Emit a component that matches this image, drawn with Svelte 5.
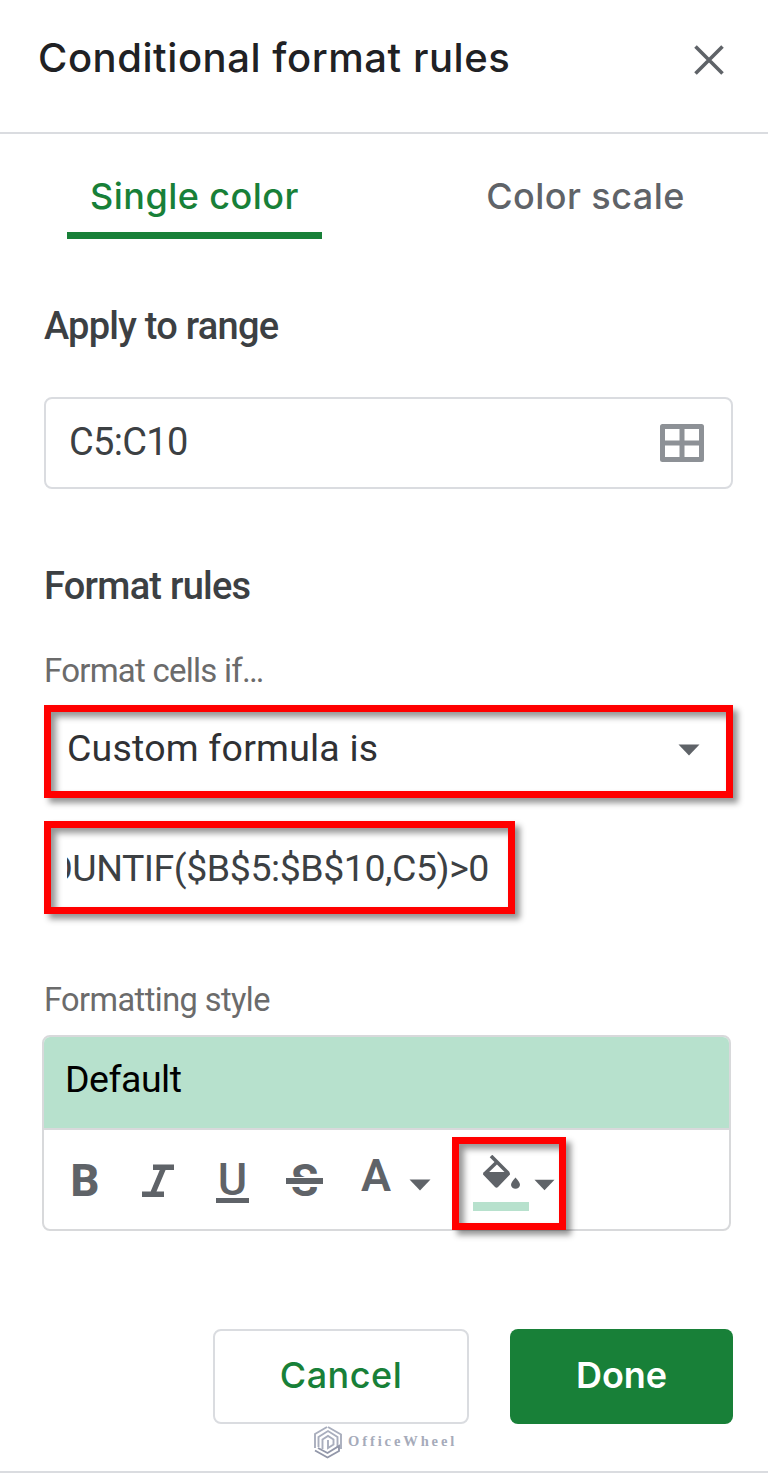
<script lang="ts">
  let tab = $state('single');
  let range = $state('C5:C10');
</script>

{#snippet caret()}
  <svg class="caret" viewBox="0 0 22 12" width="22" height="12" aria-hidden="true">
    <path d="M0.5 0.5h21L11 11.5z" fill="currentColor" />
  </svg>
{/snippet}

<div class="sidebar">
  <header>
    <h1>Conditional format rules</h1>
    <button class="close" aria-label="Close">
      <svg viewBox="0 0 30 30" width="30" height="30">
        <path d="M1.5 1.5l27 27M28.5 1.5l-27 27" fill="none" stroke="currentColor" stroke-width="3.6" />
      </svg>
    </button>
  </header>

  <nav>
    <button class="tab" class:active={tab === 'single'} onclick={() => (tab = 'single')}>Single color</button>
    <button class="tab" class:active={tab === 'scale'} onclick={() => (tab = 'scale')}>Color scale</button>
  </nav>

  <main>
    <h2>Apply to range</h2>
    <div class="range">
      <span>{range}</span>
      <svg viewBox="0 0 44 38" width="44" height="38" aria-hidden="true">
        <path d="M2.5 2.5h39v33h-39zM22 2v34M2 19h40" fill="none" stroke="#8d9196" stroke-width="5" stroke-linejoin="round" />
      </svg>
    </div>

    <h2 class="rules">Format rules</h2>
    <p class="label">Format cells if…</p>
    <div class="condition frame">
      <span>Custom formula is</span>
      {@render caret()}
    </div>
    <div class="formula frame">
      <div class="clip"><span>OUNTIF($B$5:$B$10,C5)&gt;0</span></div>
    </div>

    <p class="label style-label">Formatting style</p>
    <div class="style-box">
      <div class="preview">Default</div>
      <div class="toolbar">
        <button class="bold" aria-label="Bold">B</button>
        <button class="italic" aria-label="Italic">
          <svg viewBox="0 0 34 34" width="34" height="34">
            <path d="M12 3.2h21M1 30.3h22M22.5 4L11.5 30" fill="none" stroke="currentColor" stroke-width="5.4" />
          </svg>
        </button>
        <button class="underline" aria-label="Underline">U</button>
        <button class="strike" aria-label="Strikethrough">S</button>
        <button class="color" aria-label="Text color">A</button>
        <span class="color-caret">{@render caret()}</span>
        <div class="fill frame">
          <div class="bucket">
            <svg viewBox="0 0 40 36" width="40" height="36" aria-hidden="true">
              <path d="M10 1L27.500 18.500M16 7L3.500 19" fill="none" stroke="currentColor" stroke-width="3.600" />
              <path d="M3.500 17h24q2.500 1.500 1 3L17 32q-1.500 1.500-3 0L2.500 20q-1.500-1.500 1-3z" fill="currentColor" />
              <path d="M34.500 22.500q4.500 5 4.500 7.200a4.500 4 0 0 1-9 0q0-2.200 4.500-7.200z" fill="currentColor" />
            </svg>
            <i class="swatch"></i>
          </div>
          {@render caret()}
        </div>
      </div>
    </div>

    <div class="actions">
      <button class="cancel">Cancel</button>
      <button class="done">Done</button>
    </div>
  </main>

  <footer>
    <svg viewBox="0 0 30 34" width="30" height="34" aria-hidden="true">
      <g fill="none" stroke="#a9aebd" stroke-width="1.9">
        <path d="M2 23V9L14 2M15 2l13 7.500V24" />
        <path d="M5.500 22V12L15 6l9.500 6v10.500" />
        <path d="M9.500 24V14.500L15 11l5.500 3.500v5L15 23v-8" />
        <path d="M2 25.500L14.500 32.500 26 26v-5L14.500 28 5 23" stroke="#9297a9" />
      </g>
    </svg>
    <span>OfficeWheel</span>
  </footer>
</div>

<style>
  :global(body) {
    background: #fff;
  }

  .sidebar {
    box-sizing: border-box;
    width: 768px;
    height: 1473px;
    overflow: hidden;
    border-bottom: 2px solid #dadce0;
    font-family: Roboto, 'Liberation Sans', sans-serif;
    color: #3c4043;
  }

  .sidebar * {
    box-sizing: border-box;
  }

  h1,
  h2,
  p {
    margin: 0;
    white-space: nowrap;
  }

  button {
    padding: 0;
    border: 0;
    background: none;
    font-family: inherit;
    color: inherit;
  }

  svg {
    display: block;
    flex-shrink: 0;
  }

  header {
    display: flex;
    justify-content: space-between;
    height: 134px;
    padding: 34px 44px 0 38px;
    border-bottom: 2px solid #dadce0;
  }

  h1 {
    font-family: Inter, Roboto, sans-serif;
    font-size: 40px;
    line-height: 48px;
    font-weight: 500;
    letter-spacing: 0.55px;
    color: #202124;
  }

  .close {
    height: 30px;
    margin-top: 11px;
    color: #5f6368;
  }

  nav {
    display: flex;
    gap: 136px;
    padding-left: 67px;
    height: 105px;
  }

  .tab {
    display: flex;
    justify-content: center;
    width: 255px;
    height: 105px;
    padding-top: 40px;
    border-bottom: 7px solid transparent;
    font-family: Inter, Roboto, sans-serif;
    font-size: 36px;
    font-weight: 500;
    line-height: 44px;
    letter-spacing: 0.45px;
    color: #5f6368;
    white-space: nowrap;
  }

  .tab.active {
    color: #188038;
    border-image: linear-gradient(#188038, #188038) 0 0 7 0;
  }

  main {
    padding: 65px 35px 0 44px;
  }

  h2 {
    height: 44px;
    font-size: 38px;
    line-height: 44px;
    font-weight: 500;
    letter-spacing: -0.75px;
  }

  .range {
    display: flex;
    align-items: center;
    justify-content: space-between;
    height: 92px;
    margin-top: 49px;
    padding: 0 27px 0 23px;
    border: 2px solid #dadce0;
    border-radius: 8px;
    font-size: 38px;
    letter-spacing: -0.7px;
  }

  .range span {
    margin-top: -2px;
  }

  .rules {
    margin-top: 75px;
  }

  .label {
    height: 40px;
    margin-top: 43px;
    font-size: 33px;
    line-height: 40px;
    letter-spacing: -0.75px;
    color: #6b6b6b;
  }

  .frame {
    border: 7px solid #f00;
    box-shadow:
      5px 5px 6px rgba(0, 0, 0, 0.42),
      inset 5px 5px 6px rgba(0, 0, 0, 0.42);
  }

  .condition {
    display: flex;
    align-items: center;
    justify-content: space-between;
    height: 93px;
    margin-top: 14px;
    padding: 0 26px 0 16px;
    font-size: 37.5px;
    letter-spacing: 0.2px;
    color: #303134;
  }

  .condition span {
    margin-top: -8px;
  }

  .condition .caret {
    margin-top: -4px;
  }

  .caret {
    color: #5f6368;
  }

  .formula {
    width: 471px;
    height: 93px;
    margin-top: 23px;
    padding: 18px 19px 0 16px;
  }

  /* a long formula shows its end, like a focused input */
  .clip {
    display: flex;
    justify-content: flex-end;
    overflow: hidden;
    font-size: 37.5px;
    line-height: 44px;
    letter-spacing: -0.45px;
    white-space: nowrap;
  }

  .style-label {
    margin-top: 66px;
    font-size: 32.5px;
    letter-spacing: -0.55px;
  }

  .style-box {
    width: 689px;
    height: 196px;
    margin: 15px 0 0 -2px;
    border: 2px solid #d8d9db;
    border-radius: 8px;
  }

  .preview {
    height: 93px;
    padding: 20px 0 0 21px;
    border-bottom: 2px solid #d8d9db;
    border-radius: 6px 6px 0 0;
    background: #b7e1cd;
    font-size: 37.5px;
    line-height: 44px;
    letter-spacing: -0.5px;
    color: #000;
  }

  .toolbar {
    display: flex;
    align-items: flex-start;
    height: 99px;
    padding-left: 25px;
    color: #5f6368;
  }

  .toolbar button {
    display: flex;
    justify-content: center;
    height: 54px;
    margin-top: 24px;
    font-size: 45px;
    line-height: 54px;
    font-weight: 500;
  }

  .toolbar .bold {
    width: 32px;
    font-weight: 800;
  }

  .toolbar .italic {
    width: 34px;
    margin: 34px 0 0 40px;
    height: 34px;
  }

  .toolbar .underline {
    width: 33px;
    height: 49px;
    margin-left: 41px;
    border-bottom: 5px solid #5f6368;
    line-height: 51px;
  }

  .toolbar .strike {
    position: relative;
    width: 37px;
    margin-left: 37px;
    font-weight: 700;
  }

  .strike::after {
    content: '';
    position: absolute;
    left: 0;
    right: 0;
    top: 23px;
    height: 6px;
    border-top: 1px solid #fff;
    border-bottom: 3px solid #fff;
    box-sizing: content-box;
    background: #5f6368;
    background-clip: padding-box;
  }

  .toolbar .color {
    width: 30px;
    margin: 19px 0 0 38px;
    font-weight: 600;
  }

  .color-caret {
    margin: 49px 0 0 18px;
  }

  .fill {
    display: flex;
    width: 114px;
    height: 93px;
    margin: 7px 0 0 21px;
    padding: 11px 0 0 14px;
  }

  .bucket {
    width: 56px;
    padding-left: 8px;
  }

  .swatch {
    display: block;
    width: 56px;
    height: 9px;
    margin: 11px 0 0 -8px;
    background: #b7e1cd;
  }

  .fill .caret {
    width: 21px;
    margin: 24px 0 0 5px;
  }

  .actions {
    display: flex;
    justify-content: flex-end;
    gap: 41px;
    margin-top: 98px;
  }

  .actions button {
    height: 95px;
    padding-bottom: 3px;
    border-radius: 8px;
    font-family: Inter, Roboto, sans-serif;
    font-size: 36px;
  }

  .actions .cancel {
    width: 256px;
    border: 2px solid #dadce0;
    color: #188038;
    font-weight: 500;
    letter-spacing: 0.5px;
  }

  .actions .done {
    width: 223px;
    background: #188038;
    color: #fff;
    font-weight: 600;
    letter-spacing: -0.1px;
  }

  footer {
    display: flex;
    align-items: center;
    gap: 5px;
    height: 34px;
    padding: 1px 0 0 313px;
    font-family: 'Liberation Serif', serif;
    font-size: 14.5px;
    font-weight: 700;
    letter-spacing: 2.9px;
    color: #a6abba;
  }
</style>
